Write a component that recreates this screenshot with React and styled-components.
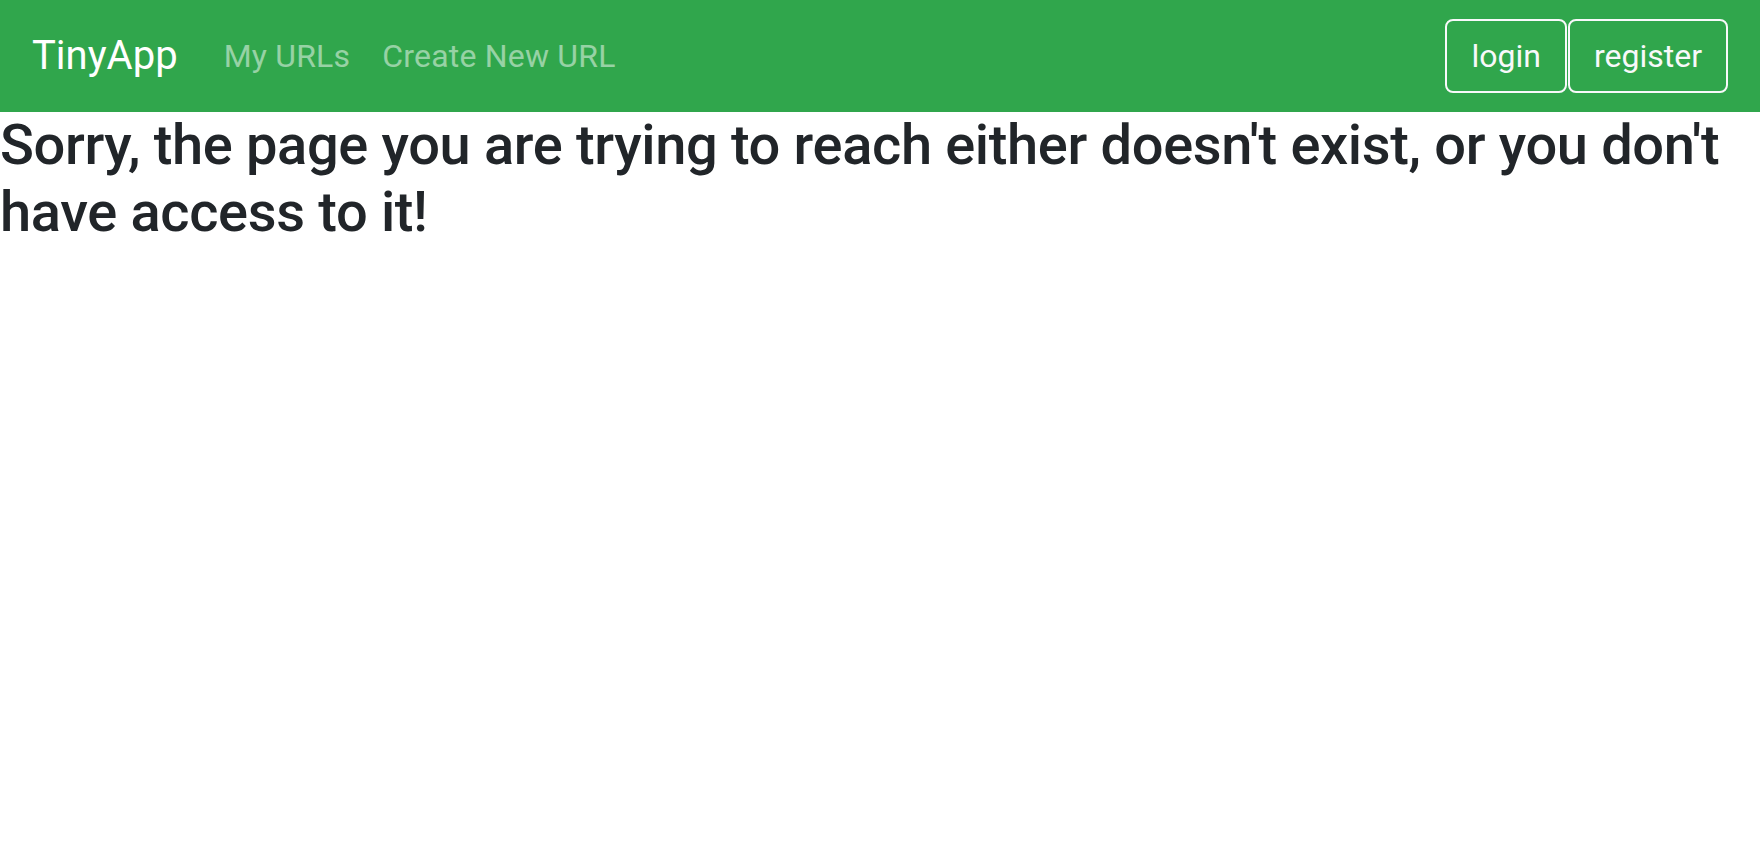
import React from 'react';
import styled, { createGlobalStyle } from 'styled-components';

const GlobalStyle = createGlobalStyle`
  * {
    box-sizing: border-box;
  }
  body {
    margin: 0;
    background: #fff;
    font-family: Roboto, "Liberation Sans", Arial, sans-serif;
    color: #212529;
  }
`;

const Navbar = styled.nav`
  display: flex;
  align-items: center;
  height: 112px;
  padding: 16px 32px;
  background-color: #30a64c;
`;

const Brand = styled.a`
  font-size: 40px;
  line-height: 60px;
  color: #fff;
  text-decoration: none;
  margin-right: 30px;
`;

const NavLinks = styled.div`
  display: flex;
  align-items: center;
  flex: 1;
`;

const NavLink = styled.a`
  font-size: 32px;
  line-height: 48px;
  padding: 0 16px;
  color: rgba(255, 255, 255, 0.5);
  text-decoration: none;
  letter-spacing: 0.2px;
`;

const Actions = styled.div`
  display: flex;
  gap: 1px;
`;

const Button = styled.button`
  font-family: inherit;
  font-size: 32px;
  line-height: 48px;
  padding: 11px 24px;
  color: #f8f9fa;
  background: transparent;
  border: 2px solid #f8f9fa;
  border-radius: 8px;
  cursor: pointer;
`;

const Message = styled.h3`
  margin: 0 0 16px;
  font-size: 56px;
  font-weight: 500;
  line-height: 1.2;
  letter-spacing: -0.35px;
  color: #212529;
`;

const App = () => {
  return (
    <>
      <GlobalStyle />
      <Navbar>
        <Brand href="#">TinyApp</Brand>
        <NavLinks>
          <NavLink href="#">My URLs</NavLink>
          <NavLink href="#">Create New URL</NavLink>
        </NavLinks>
        <Actions>
          <Button>login</Button>
          <Button>register</Button>
        </Actions>
      </Navbar>
      <Message>
        Sorry, the page you are trying to reach either doesn't exist, or you don't have access to it!
      </Message>
    </>
  );
};

export default App;
